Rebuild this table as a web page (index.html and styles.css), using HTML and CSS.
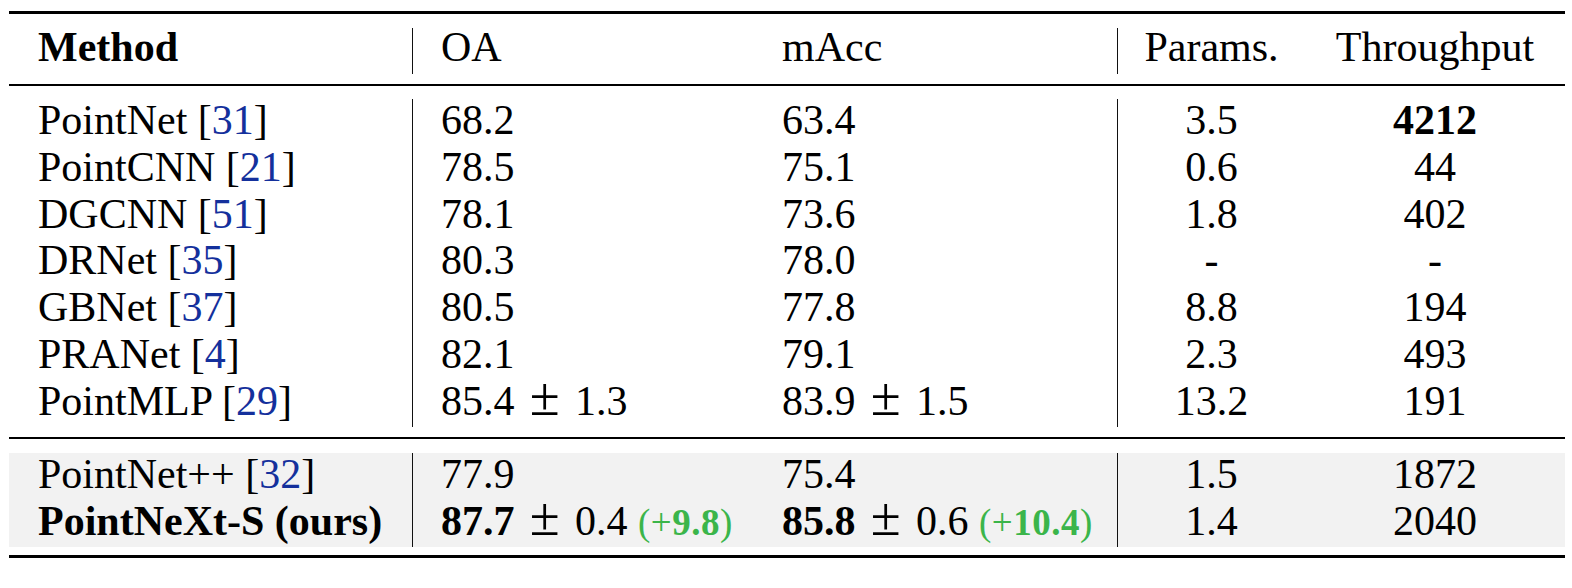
FILE: index.html
```html
<!DOCTYPE html>
<html lang="en">
<head>
    <meta charset="UTF-8">
    <title>Classification results</title>
    <link rel="stylesheet" href="styles.css">
</head>
<body>
    <div class="results">
        <div class="rule thick top"></div>

        <div class="row head">
            <div class="cell method"><b>Method</b></div>
            <div class="cell oa sep">OA</div>
            <div class="cell macc">mAcc</div>
            <div class="cell params sep">Params.</div>
            <div class="cell tput">Throughput</div>
        </div>

        <div class="rule"></div>

        <div class="group">
            <div class="row">
                <div class="cell method">PointNet [<span class="cite">31</span>]</div>
                <div class="cell oa sep">68.2</div>
                <div class="cell macc">63.4</div>
                <div class="cell params sep">3.5</div>
                <div class="cell tput"><b>4212</b></div>
            </div>
            <div class="row">
                <div class="cell method">PointCNN [<span class="cite">21</span>]</div>
                <div class="cell oa sep">78.5</div>
                <div class="cell macc">75.1</div>
                <div class="cell params sep">0.6</div>
                <div class="cell tput">44</div>
            </div>
            <div class="row">
                <div class="cell method">DGCNN [<span class="cite">51</span>]</div>
                <div class="cell oa sep">78.1</div>
                <div class="cell macc">73.6</div>
                <div class="cell params sep">1.8</div>
                <div class="cell tput">402</div>
            </div>
            <div class="row">
                <div class="cell method">DRNet [<span class="cite">35</span>]</div>
                <div class="cell oa sep">80.3</div>
                <div class="cell macc">78.0</div>
                <div class="cell params sep">-</div>
                <div class="cell tput">-</div>
            </div>
            <div class="row">
                <div class="cell method">GBNet [<span class="cite">37</span>]</div>
                <div class="cell oa sep">80.5</div>
                <div class="cell macc">77.8</div>
                <div class="cell params sep">8.8</div>
                <div class="cell tput">194</div>
            </div>
            <div class="row">
                <div class="cell method">PRANet [<span class="cite">4</span>]</div>
                <div class="cell oa sep">82.1</div>
                <div class="cell macc">79.1</div>
                <div class="cell params sep">2.3</div>
                <div class="cell tput">493</div>
            </div>
            <div class="row">
                <div class="cell method">PointMLP [<span class="cite">29</span>]</div>
                <div class="cell oa sep">85.4<span class="pm">±</span>1.3</div>
                <div class="cell macc">83.9<span class="pm">±</span>1.5</div>
                <div class="cell params sep">13.2</div>
                <div class="cell tput">191</div>
            </div>
        </div>

        <div class="rule"></div>

        <div class="group shaded">
            <div class="row">
                <div class="cell method">PointNet++ [<span class="cite">32</span>]</div>
                <div class="cell oa sep">77.9</div>
                <div class="cell macc">75.4</div>
                <div class="cell params sep">1.5</div>
                <div class="cell tput">1872</div>
            </div>
            <div class="row">
                <div class="cell method"><b>PointNeXt-S (ours)</b></div>
                <div class="cell oa sep"><b>87.7</b><span class="pm">±</span>0.4 <span class="gain">(+<b>9.8</b>)</span></div>
                <div class="cell macc"><b>85.8</b><span class="pm">±</span>0.6 <span class="gain">(+<b>10.4</b>)</span></div>
                <div class="cell params sep">1.4</div>
                <div class="cell tput">2040</div>
            </div>
        </div>

        <div class="rule thick bottom"></div>
    </div>
</body>
</html>
```

FILE: styles.css
```css
body {
    margin: 0;
    background: #fff;
    color: #000;
    font-family: 'Liberation Serif', 'Times New Roman', serif;
    font-size: 42px;
}

.results {
    width: 1556px;
    margin-left: 9px;
    padding-top: 11px;
}

.rule {
    height: 2px;
    background: #000;
}

.rule.thick {
    height: 3px;
}

.row {
    display: grid;
    grid-template-columns: 403px 342px 363px 188px 260px;
    height: 46.8px;
    line-height: 42px;
}

.head {
    height: 46px;
    line-height: 39px;
    margin: 14px 0 10px;
}

.group {
    margin: 13px 0 10px;
}

.group.shaded {
    background: #f2f2f2;
    margin: 14px 0 8px;
}

.group.shaded .row {
    height: 47px;
}

.cell {
    white-space: nowrap;
}

.sep {
    border-left: 1px solid #111;
}

.method {
    padding-left: 29px;
}

.oa, .macc {
    padding-left: 28px;
}

.params, .tput {
    text-align: center;
}

.cite {
    color: #14309c;
}

.pm {
    font-size: 1.3em;
    line-height: 0;
    margin: 0 0.28em;
}

.gain {
    color: #3bb54a;
    font-size: 37px;
    letter-spacing: 0.5px;
}
```
